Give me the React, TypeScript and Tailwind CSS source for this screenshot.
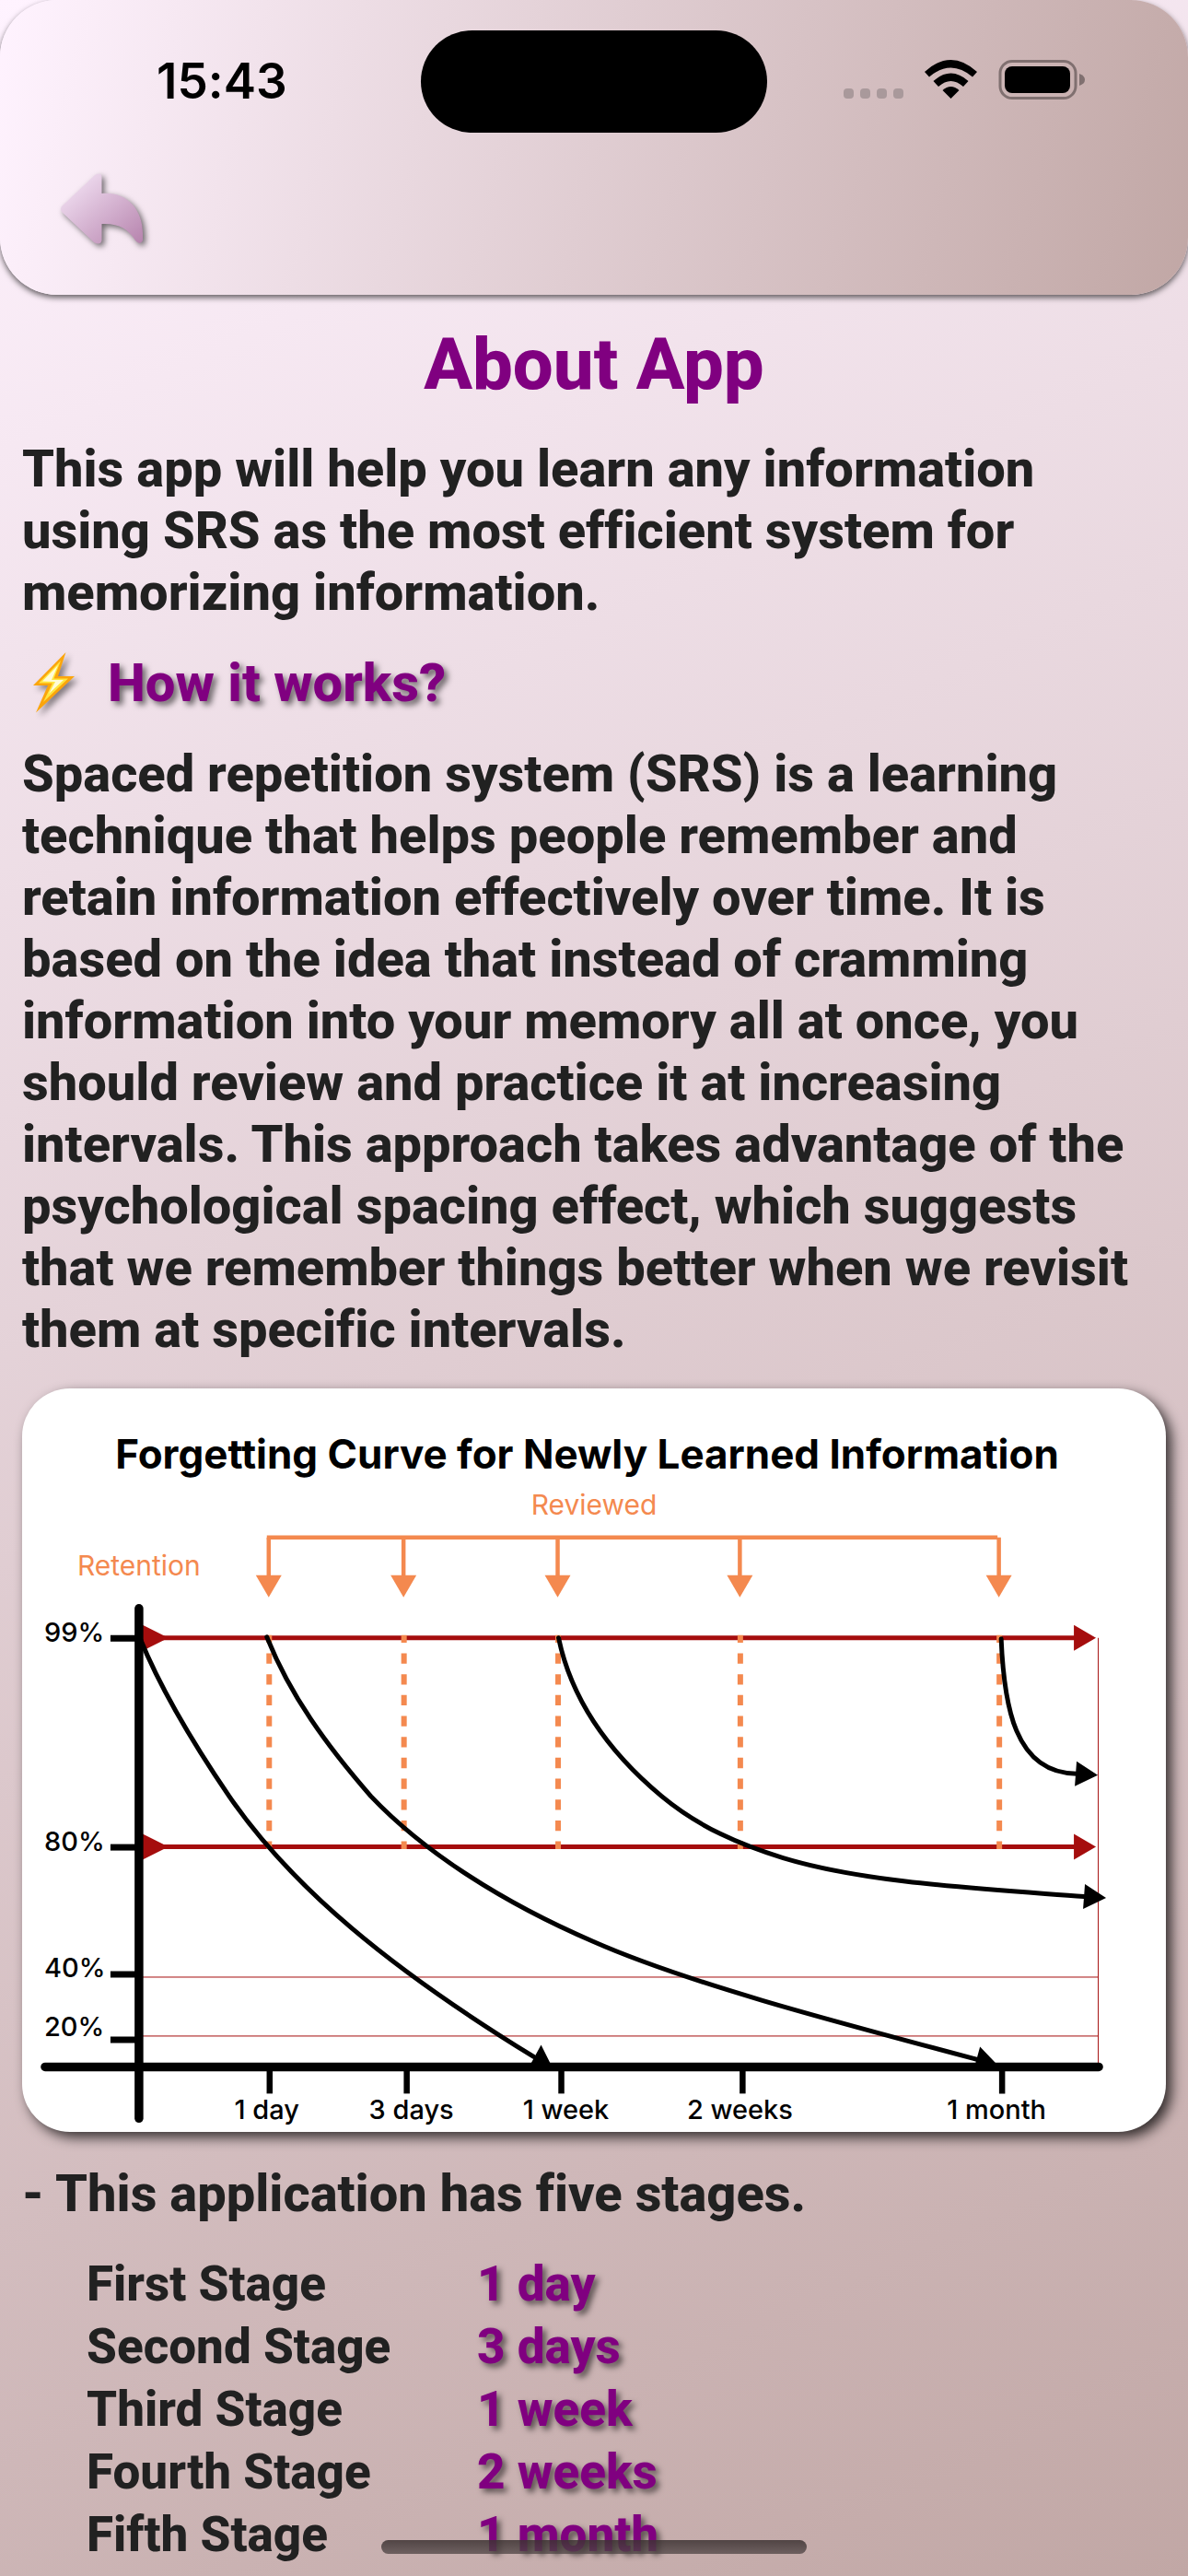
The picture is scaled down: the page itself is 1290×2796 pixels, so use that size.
import React from "react";

const stages = [
  { name: "First Stage", interval: "1 day" },
  { name: "Second Stage", interval: "3 days" },
  { name: "Third Stage", interval: "1 week" },
  { name: "Fourth Stage", interval: "2 weeks" },
  { name: "Fifth Stage", interval: "1 month" },
];

const accent = "text-[#800080] [text-shadow:4px_4px_6px_rgba(0,0,0,0.55)]";

function StatusBar() {
  return (
    <div className="grid h-[144px] grid-cols-[1fr_376px_1fr] pt-[33px]">
      <div className="flex items-center pl-[170px] font-['Inter',sans-serif] text-[53px] leading-none font-semibold text-black">
        15:43
      </div>
      <div className="h-[111px] rounded-full bg-black" />
      <div className="flex items-start justify-end pt-8 pr-[112px]">
        <svg className="h-[43px] w-[262px]" viewBox="916 65 262 43" role="img" aria-label="Signal, Wi-Fi and battery">
          <g fill="#a9999b">
            <rect x="916" y="96" width="11" height="11" rx="4" />
            <rect x="934" y="96" width="11" height="11" rx="4" />
            <rect x="952" y="96" width="11" height="11" rx="4" />
            <rect x="970" y="96" width="11" height="11" rx="4" />
          </g>
          <g>
            <path d="M1004 78 Q1032.500 52 1061 78 L1056 83.500 Q1032.500 63.500 1009 83.500 Z" />
            <path d="M1013.500 88 Q1032.500 71 1051.500 88 L1046 94 Q1032.500 82 1019 94 Z" />
            <path d="M1023.500 98 Q1032.500 90 1041.500 98 L1032.500 107 Z" />
          </g>
          <rect x="1086" y="66.500" width="82" height="40" rx="13" fill="none" stroke="#807070" strokeWidth="3" />
          <rect x="1091" y="72" width="71" height="29" rx="8" />
          <path d="M1172 80 Q1178 82 1178 86.500 Q1178 91 1172 93 Z" fill="#807070" />
        </svg>
      </div>
    </div>
  );
}

function BackIcon() {
  return (
    <svg className="h-[92px] w-[104px] overflow-visible drop-shadow-[3px_3px_3px_rgba(0,0,0,0.55)]" viewBox="60 182 104 92" aria-hidden="true">
      <defs>
        <linearGradient id="back" x1="0" y1="0" x2="1" y2="1">
          <stop offset="0" stopColor="#f8eafa" />
          <stop offset="1" stopColor="#b683ad" />
        </linearGradient>
      </defs>
      <path
        fill="url(#back)"
        d="M67 224 L103 190 Q110.500 186 110.500 193 V210 C138 208 155 227 155 254 V261 Q152 267 147 261 C139 248 128 242 110.500 243 V261 Q109 267 102 263 L67 230 Q65 227 67 224 Z"
      />
    </svg>
  );
}

function Bolt() {
  return (
    <svg className="h-[66px] w-[45px] overflow-visible drop-shadow-[4px_4px_3px_rgba(0,0,0,0.45)]" viewBox="36 708 45 66" aria-hidden="true">
      <path d="M71.500 708 L36 744 L52 744 L39 773.500 L81 734 L63 734 Z" fill="#fba50c" />
      <path d="M66 717 L42 741.500 L57 741.500 L47 762 L74 736.500 L58.500 736.500 Z" fill="#ffe640" />
      <path d="M63 722 L46 739.500 L60 740 L53 753 L69 738 L56 738 Z" fill="#fffcd8" />
    </svg>
  );
}

const reviews = [292, 438.5, 606, 804, 1085.5];
const retention = [
  { label: "99%", tick: 1778.5, base: 1782 },
  { label: "80%", tick: 2005.5, base: 2009 },
  { label: "40%", tick: 2143.5, base: 2147 },
  { label: "20%", tick: 2214.5, base: 2211 },
];
const days = [
  { label: "1 day", tick: 293, mid: 290 },
  { label: "3 days", tick: 442, mid: 447 },
  { label: "1 week", tick: 610, mid: 615 },
  { label: "2 weeks", tick: 807, mid: 804 },
  { label: "1 month", tick: 1089, mid: 1083 },
];

function ForgettingCurve() {
  return (
    <svg className="block w-full font-['Inter',sans-serif] font-normal" viewBox="24 1507 1243 808" role="img" aria-label="Forgetting curve chart">
      <text x="638" y="1594" textAnchor="middle" fontSize="44" fontWeight="700">
        Forgetting Curve for Newly Learned Information
      </text>
      <g fill="#f4894f" fontSize="30">
        <text x="645.500" y="1644" textAnchor="middle">Reviewed</text>
        <text x="151" y="1710" textAnchor="middle">Retention</text>
      </g>
      <g stroke="#a50d0d" fill="#a50d0d">
        {[1778, 2005].map((y) => (
          <g key={y}>
            <path d={`M155 ${y} H1168`} strokeWidth="5" />
            <path d={`M155 ${y - 14} L183 ${y} L155 ${y + 14} Z M1167 ${y - 14} L1191 ${y} L1167 ${y + 14} Z`} stroke="none" />
          </g>
        ))}
        <path d="M152 2146.500 H1193.500 M152 2210.500 H1193.500 M1193.500 1778 V2241" strokeWidth="1" fill="none" />
      </g>
      <path d="M290 1669 H1084" stroke="#f4894f" strokeWidth="4.500" />
      {reviews.map((x) => (
        <g key={x} stroke="#f4894f">
          <path d={`M${x} 1669 V1711`} strokeWidth="4.500" />
          <path d={`M${x - 14} 1710 H${x + 14} L${x} 1734 Z`} fill="#f4894f" stroke="none" />
          <path d={`M${x + 0.5} 1775 V2007.500`} strokeWidth="6" strokeDasharray="11.300 11.400" strokeDashoffset="3" />
        </g>
      ))}
      <g stroke="#000" strokeLinecap="round">
        <path d="M151 1746 V2300" strokeWidth="9.500" />
        <path d="M49 2244 H1194" strokeWidth="9.500" />
      </g>
      <g fill="none" stroke="#000" strokeWidth="5" strokeLinecap="round">
        <path d="M152 1778 C175 1835 215 1900 249 1950 C318 2050 425 2138 580 2233" />
        <path d="M290 1777 C315 1840 355 1895 403 1950 C460 2010 545 2065 645 2108 C745 2152 900 2193 1062 2236" />
        <path d="M607 1778 C622 1850 665 1905 719 1950 C760 1984 805 2003 851 2017 C940 2044 1060 2050 1178 2059" />
        <path d="M1088 1779 C1091 1850 1102 1925 1170 1925.500" />
      </g>
      <path d="M588 2220 L576 2242 L602 2248 Z M1065 2222 L1059 2244 L1088 2246 Z M1179 2045.500 L1177 2072.500 L1202 2060.500 Z M1170 1912 L1168 1939 L1193 1927 Z" />
      {retention.map((r) => (
        <g key={r.label}>
          <path d={`M120 ${r.tick} H151`} stroke="#000" strokeWidth="7" />
          <text x="48" y={r.base} fontSize="29" fontWeight="500">{r.label}</text>
        </g>
      ))}
      {days.map((d) => (
        <g key={d.label}>
          <path d={`M${d.tick} 2246 V2273`} stroke="#000" strokeWidth="6.500" />
          <text x={d.mid} y="2301" textAnchor="middle" fontSize="29" fontWeight="500">{d.label}</text>
        </g>
      ))}
    </svg>
  );
}

export default function App() {
  return (
    <div className="relative min-h-screen overflow-hidden bg-[linear-gradient(155deg,#fff3ff,#c1a7a5)] font-['Roboto',sans-serif] text-[56px] leading-[67px] font-extrabold text-[#212121] [font-variant-ligatures:none]">
      <header className="h-[320px] rounded-[62px] bg-[linear-gradient(104deg,#fff3ff,#c1a7a5)] shadow-[0_3px_6px_rgba(0,0,0,0.6)]">
        <StatusBar />
        <button type="button" aria-label="Back" className="mt-[38px] ml-[60px] block cursor-pointer">
          <BackIcon />
        </button>
      </header>

      <main className="px-6">
        <h1 className="pt-7 text-center text-[78px] leading-[96px] text-[#800080]">About App</h1>
        <p className="mt-8 whitespace-nowrap">
          This app will help you learn any information
          <br />
          using SRS as the most efficient system for
          <br />
          memorizing information.
        </p>
        <h2 className="mt-[30px] flex h-[68px] items-center gap-9 pl-3 text-[58px]">
          <Bolt />
          <span className={accent}>How it works?</span>
        </h2>
        <p className="mt-8 whitespace-nowrap">
          Spaced repetition system (SRS) is a learning
          <br />
          technique that helps people remember and
          <br />
          retain information effectively over time. It is
          <br />
          based on the idea that instead of cramming
          <br />
          information into your memory all at once, you
          <br />
          should review and practice it at increasing
          <br />
          intervals. This approach takes advantage of the
          <br />
          psychological spacing effect, which suggests
          <br />
          that we remember things better when we revisit
          <br />
          them at specific intervals.
        </p>
        <section className="mt-[30px] overflow-hidden rounded-[52px] bg-white shadow-[6px_6px_14px_rgba(0,0,0,0.75)]">
          <ForgettingCurve />
        </section>
        <p className="mt-[34px]">- This application has five stages.</p>
        <table className="mt-[30px] ml-[70px] text-[53px]">
          <tbody>
            {stages.map((s) => (
              <tr key={s.name} className="h-[68px]">
                <th scope="row" className="w-[424px] p-0 text-left font-extrabold">{s.name}</th>
                <td className={`p-0 ${accent}`}>{s.interval}</td>
              </tr>
            ))}
          </tbody>
        </table>
      </main>

      <div className="absolute bottom-6 left-1/2 h-[15px] w-[462px] -translate-x-1/2 rounded-full bg-[linear-gradient(180deg,rgba(60,50,50,0.85),rgba(80,70,70,0.75))]" />
    </div>
  );
}
